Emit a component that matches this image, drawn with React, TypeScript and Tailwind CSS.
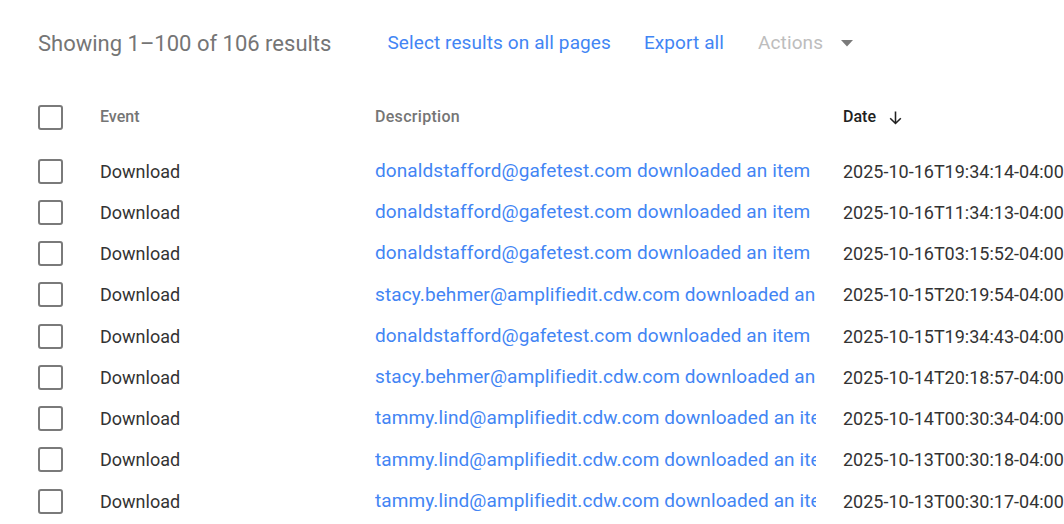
import React from "react";

type Row = { email: string; date: string };

const rows: Row[] = [
  { email: "donaldstafford@gafetest.com", date: "2025-10-16T19:34:14-04:00" },
  { email: "donaldstafford@gafetest.com", date: "2025-10-16T11:34:13-04:00" },
  { email: "donaldstafford@gafetest.com", date: "2025-10-16T03:15:52-04:00" },
  { email: "stacy.behmer@amplifiedit.cdw.com", date: "2025-10-15T20:19:54-04:00" },
  { email: "donaldstafford@gafetest.com", date: "2025-10-15T19:34:43-04:00" },
  { email: "stacy.behmer@amplifiedit.cdw.com", date: "2025-10-14T20:18:57-04:00" },
  { email: "tammy.lind@amplifiedit.cdw.com", date: "2025-10-14T00:30:34-04:00" },
  { email: "tammy.lind@amplifiedit.cdw.com", date: "2025-10-13T00:30:18-04:00" },
  { email: "tammy.lind@amplifiedit.cdw.com", date: "2025-10-13T00:30:17-04:00" },
];

function Checkbox() {
  return (
    <div className="w-[25px] h-[25px] shrink-0 rounded-[3px] border-2 border-[#7a7a7a] bg-white" />
  );
}

export default function App() {
  return (
    <div
      className="w-[1064px] h-[524px] overflow-hidden bg-white pl-[38px]"
      style={{ fontFamily: "Roboto, 'Noto Sans', sans-serif" }}
    >
      {/* toolbar */}
      <div className="flex items-center h-[44px] mt-[21px] whitespace-nowrap">
        <span className="text-[22px] text-[#757575]">Showing 1–100 of 106 results</span>
        <span className="ml-[56px] text-[19px] tracking-[0.1px] text-[#4285f4]">
          Select results on all pages
        </span>
        <span className="ml-[33px] text-[19px] tracking-[0.1px] text-[#4285f4]">Export all</span>
        <span className="ml-[34px] text-[19px] tracking-[0.1px] text-[#bdbdbd]">Actions</span>
        <svg className="ml-[18px]" width="12" height="7" viewBox="0 0 12 7">
          <path d="M0 0 L12 0 L6 6.5 Z" fill="#7a7a7a" />
        </svg>
      </div>

      {/* header row */}
      <div className="flex items-center h-[40px] mt-[32px] whitespace-nowrap">
        <Checkbox />
        <div className="w-[275px] ml-[37px] text-[16px] font-medium text-[#757575]">Event</div>
        <div className="w-[468px] text-[16px] font-medium tracking-[0.3px] text-[#757575]">
          Description
        </div>
        <div className="flex items-center text-[16px] font-medium text-[#212121]">
          Date
          <svg className="ml-[11px]" width="17" height="17" viewBox="0 0 24 24">
            <path
              d="M12 3.5v16.5M4.5 13l7.5 7.5 7.5-7.5"
              fill="none"
              stroke="#212121"
              strokeWidth="2.2"
            />
          </svg>
        </div>
      </div>

      {/* data rows */}
      <div className="mt-[13.5px]">
        {rows.map((r, i) => (
          <div key={i} className="flex items-center h-[41.25px] whitespace-nowrap">
            <Checkbox />
            <div className="w-[275px] ml-[37px] text-[18px] text-[#333333]">Download</div>
            <div className="w-[441px] overflow-hidden text-[19px] tracking-[0.1px] text-[#4285f4]">
              {r.email} downloaded an item
            </div>
            <div className="ml-[27px] text-[18px] text-[#333333]">{r.date}</div>
          </div>
        ))}
      </div>
    </div>
  );
}
